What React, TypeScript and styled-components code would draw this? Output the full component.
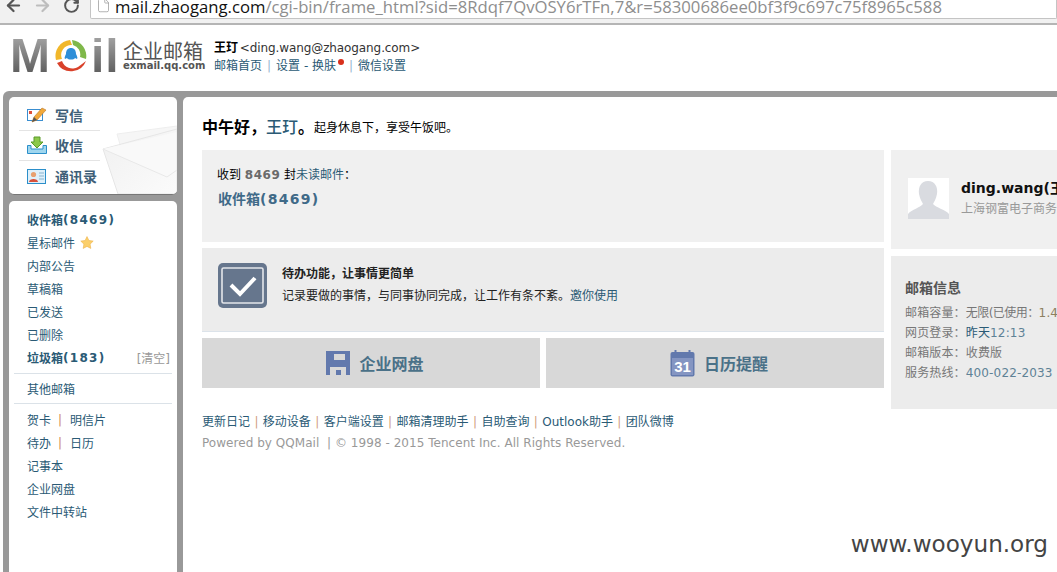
import React from "react";
import styled, { createGlobalStyle } from "styled-components";
import { ArrowLeft, ArrowRight, RotateCw, File } from "lucide-react";

const CJK = `"DejaVu Sans", "Noto Sans CJK SC", sans-serif`;

const Global = createGlobalStyle`
  html, body { margin: 0; padding: 0; background: #fff; overflow: hidden; }
  * { box-sizing: border-box; }
  a { text-decoration: none; }
`;

const Page = styled.div`
  width: 1057px; height: 572px; overflow: hidden; position: relative;
  display: flex; flex-direction: column; font-family: ${CJK}; font-size: 12px; color: #000;
`;

/* browser chrome */
const Chrome = styled.div`
  height: 25px; flex: none; background: #f1f1f1; border-bottom: 2px solid #b5b5b5;
  display: flex; align-items: flex-start; overflow: hidden;
`;
const NavButton = styled.span<{ $c: string }>`
  width: 29px; height: 16px; flex: none; display: flex; align-items: center; justify-content: center; color: ${p => p.$c};
`;
const Nav = styled.div`
  display: flex; margin-top: -3px; margin-left: -1px;
`;
const UrlBox = styled.div`
  margin-left: 4px; width: 970px; height: 20px; margin-top: -1px; background: #fff;
  border: 1px solid #c4c4c4; border-top: 0; border-radius: 0 0 2px 2px; display: flex; align-items: flex-start; padding-left: 5px; overflow: hidden;
`;
const UrlIcon = styled.span`
  width: 15px; flex: none; color: #999; margin-top: -1px; margin-right: 5px; display: flex;
`;
const UrlText = styled.div`
  font-family: "Open Sans", sans-serif; font-size: 16.7px; line-height: 17px; color: #8e8e8e; white-space: nowrap; margin: -1px 0 0 -1px;
  b { font-weight: 400; color: #111; }
`;

/* header */
const Header = styled.div`
  height: 66px; flex: none; display: flex; padding: 13px 0 0 10px;
`;
const Logo = styled.div`
  width: 107px; height: 36px; position: relative; display: flex; align-items: center;
`;
const LogoLetters = styled.span<{ $gap?: number }>`
  font-family: "Liberation Sans", sans-serif; font-weight: 700; font-size: 48px; line-height: 36px; letter-spacing: ${p => p.$gap ?? 0}px;
  background: linear-gradient(#a0a0a0, #5d5d5d); -webkit-background-clip: text; background-clip: text; color: transparent;
`;
const LogoRing = styled.svg`
  width: 36px; height: 36px; flex: none; margin: 0 2px 0 3px;
`;
const Brand = styled.div`
  margin-left: 6px; width: 85px; display: flex; flex-direction: column;
`;
const BrandTitle = styled.div`
  font-family: "Noto Sans CJK SC", sans-serif; font-size: 20px; line-height: 19px; color: #555; margin-top: 3px; white-space: nowrap;
`;
const BrandSub = styled.div`
  font-family: "DejaVu Sans", sans-serif; font-weight: 700; font-size: 10px; line-height: 11px; color: #555; white-space: nowrap;
`;
const UserBlock = styled.div`
  margin-left: 6px; display: flex; flex-direction: column; margin-top: 2px;
`;
const UserLine = styled.div`
  font-size: 12px; line-height: 17px; color: #333; white-space: nowrap; letter-spacing: -0.1px;
  b { color: #000; font-weight: 700; margin-right: 2px; }
`;
const HeaderLinks = styled.div`
  display: flex; align-items: center; font-size: 12px; line-height: 19px; color: #2a5a75; white-space: nowrap;
`;
const Pipe = styled.span`
  color: #9ab8d0; margin: 0 5px;
`;
const Dot = styled.span`
  width: 6px; height: 6px; border-radius: 50%; background: #d8301c; align-self: flex-start; margin: 2px 0 0 2px;
`;

/* frame */
const Frame = styled.div`
  flex: 1; min-height: 0; display: flex; gap: 6px; background: #999; padding: 6px 0 0 6px; margin-left: 3px; border-radius: 6px 0 0 0;
`;
const Side = styled.div`
  width: 168px; flex: none; display: flex; flex-direction: column; gap: 6px;
`;
const Quick = styled.div`
  height: 98px; flex: none; background: #fff; border-radius: 5px; border-bottom: 1px solid #777; position: relative; overflow: hidden; padding: 3px 0 0 10px;
`;
const Envelope = styled.svg`
  position: absolute; right: 0; bottom: 0; width: 76px; height: 70px;
`;
const QuickRow = styled.div<{ $last?: boolean }>`
  width: 81px; height: 30.5px; display: flex; align-items: center; gap: 8px; padding-left: 8px;
  border-bottom: ${p => (p.$last ? "0" : "1px solid #e4e4e4")}; position: relative;
  font-family: "Noto Sans CJK SC", sans-serif; font-size: 14px; font-weight: 700; color: #3f5f78; white-space: nowrap;
`;
const Folders = styled.div`
  flex: 1; background: #fff; border-radius: 5px 5px 0 0; padding: 7px 5px 0 5px;
`;
const Folder = styled.div<{ $bold?: boolean }>`
  height: 23px; padding-left: 13px; display: flex; align-items: center; white-space: nowrap;
  font-size: 12px; color: #2a5a75; font-weight: ${p => (p.$bold ? 700 : 400)};
`;
const Num = styled.span`
  letter-spacing: 1.3px;
`;
const Clear = styled.span`
  color: #999; font-weight: 400; padding-right: 2px; margin-left: auto;
`;
const StarMark = styled.svg`
  margin-left: 5px;
`;
const Rule = styled.div<{ $m?: string }>`
  height: 1px; background: #dbe2e8; margin: ${p => p.$m || "0"};
`;
const FolderPipe = styled.span`
  color: #d08a5a; margin: 0 8px 0 7px;
`;

/* main */
const Main = styled.div`
  flex: 1; min-width: 0; background: #fff; border-radius: 5px 0 0 0; overflow: hidden; padding: 19px 0 0 19px;
`;
const Greeting = styled.div`
  height: 34px; padding-bottom: 14px; display: flex; align-items: center; white-space: nowrap; font-size: 12px;
  strong { font-size: 16px; font-weight: 700; }
  em { font-style: normal; font-size: 16px; font-weight: 500; color: #2a5a75; }
`;
const Columns = styled.div`
  display: flex; gap: 7px; width: 900px;
`;
const Left = styled.div`
  width: 682px; flex: none; display: flex; flex-direction: column;
`;
const Right = styled.div`
  width: 211px; flex: none; display: flex; flex-direction: column; gap: 7px;
`;
const UnreadCard = styled.div`
  height: 92px; background: #f0f0f0; padding: 16px 15px; margin-bottom: 6px;
`;
const UnreadLine = styled.div`
  font-size: 12px; line-height: 18px; white-space: nowrap;
  b { color: #6a6a6a; letter-spacing: 0.5px; } a { color: #2a5a75; }
`;
const UnreadLink = styled.div`
  font-size: 14px; line-height: 22px; font-weight: 700; color: #3f6a88; margin: 4px 0 0 1px; white-space: nowrap;
`;
const TodoCard = styled.div`
  height: 84px; background: #ececec; border-bottom: 1px solid #dce3ea; display: flex; padding: 15px 16px; gap: 15px; margin-bottom: 6px;
`;
const TodoIcon = styled.svg`
  width: 49px; height: 45px; flex: none;
`;
const TodoText = styled.div`
  display: flex; flex-direction: column; padding-top: 2px;
`;
const TodoTitle = styled.div`
  font-weight: 700; font-size: 12px; line-height: 18px; color: #222; white-space: nowrap;
`;
const TodoDesc = styled.div`
  font-size: 12px; line-height: 20px; color: #222; white-space: nowrap; margin-top: 3px; a { color: #2a5a75; }
`;
const Shortcuts = styled.div`
  display: grid; grid-template-columns: 1fr 1fr; gap: 6px; height: 50px;
`;
const Shortcut = styled.div`
  background: #d8d8d8; display: flex; align-items: center; justify-content: center; gap: 9px; padding-left: 8px;
  font-family: "Noto Sans CJK SC", sans-serif; font-size: 16px; font-weight: 700; color: #4a7188; white-space: nowrap;
`;
const ProfileCard = styled.div`
  height: 99px; background: #f0f0f0; display: flex; align-items: center; gap: 12px; padding: 0 0 2px 17px; white-space: nowrap; overflow: hidden;
`;
const Avatar = styled.svg`
  width: 41px; height: 41px; flex: none;
`;
const ProfileName = styled.div`
  font-size: 14px; font-weight: 700; line-height: 20px; color: #111;
`;
const ProfileOrg = styled.div`
  font-size: 12px; line-height: 20px; color: #999; margin-top: 1px;
`;
const InfoCard = styled.div`
  height: 153px; background: #ececec; padding: 22px 0 0 14px; white-space: nowrap; overflow: hidden;
`;
const InfoTitle = styled.div`
  font-size: 14px; font-weight: 700; line-height: 20px; color: #555; margin-bottom: 5px;
`;
const InfoLine = styled.div`
  font-size: 12px; line-height: 20px; color: #777; letter-spacing: 0.15px;
  a { color: #2a5a75; } span { color: #5f8296; } i { font-style: normal; color: #8c8060; }
`;
const Tight = styled.b`
  font-weight: 400; letter-spacing: -0.55px;
`;
const Footer = styled.div`
  margin-top: 23px; width: 682px;
`;
const FooterLinks = styled.div`
  display: flex; font-size: 12px; line-height: 22px; color: #2a5a75; white-space: nowrap;
`;
const FooterPipe = styled.span`
  color: #d0a080; margin: 0 4.4px;
`;
const FooterCopy = styled.div`
  font-size: 12px; line-height: 21px; color: #999; white-space: nowrap; letter-spacing: 0.04px;
`;
const Watermark = styled.div`
  position: absolute; right: 9px; bottom: 14px; font-family: "DejaVu Sans", sans-serif; font-size: 23.1px; line-height: 28px; color: #444; background: #fff;
`;

const Ring = () => (
  <LogoRing viewBox="0 0 36 36">
    <path d="M3 22 A16 16 0 0 1 17 2 L19 7 A10 10 0 0 0 9 21 Z" fill="#f1b72a" />
    <path d="M19 2 A16 16 0 0 1 33 21 L27 19 A10 10 0 0 0 20 7 Z" fill="#7fb84a" />
    <path d="M33 23 A16 16 0 0 1 4 25 L9 23 A11 11 0 0 0 25 29 Z" fill="#d9412a" />
    <path d="M18 10 c-3 0 -5 2 -5 6 c-1 2 -2 4 -1 5 l2 -1 c1 2 7 2 8 0 l2 1 c1 -1 0 -3 -1 -5 c0 -4 -2 -6 -5 -6 Z" fill="#2f8fd8" />
  </LogoRing>
);

const PencilIcon = () => (
  <svg width="20" height="16" viewBox="0 0 20 16">
    <rect x="0.5" y="2.5" width="15" height="11" fill="#fff" stroke="#3a8ed0" />
    <rect x="2" y="4" width="3" height="3" fill="#e0503a" />
    <path d="M5 15 L7 10 L15 1 L19 3 L10 13 Z" fill="#f2a93a" stroke="#b8752a" strokeWidth="0.6" />
    <path d="M5 15 L7 10 L10 13 Z" fill="#555" />
  </svg>
);
const InboxIcon = () => (
  <svg width="20" height="18" viewBox="0 0 20 18">
    <path d="M0.5 9.5 H4 V13 H16 V9.5 H19.5 V17.5 H0.5 Z" fill="#9fd6ee" stroke="#2b8fca" />
    <path d="M7 1 H13 V6 H16 L10 12 L4 6 H7 Z" fill="#8cc84a" stroke="#5a9a2a" />
  </svg>
);
const ContactIcon = () => (
  <svg width="20" height="15" viewBox="0 0 20 15">
    <rect x="0.5" y="0.5" width="18" height="14" fill="#dff0fa" stroke="#2b8fca" />
    <circle cx="6.5" cy="5.5" r="2.6" fill="#e8a070" />
    <path d="M2 13 C2 9 11 9 11 13 Z" fill="#d8503a" />
    <path d="M12 4 H17 M12 7 H17 M12 10 H17" stroke="#8ab4d0" />
  </svg>
);
const Star = () => (
  <StarMark width="14" height="13" viewBox="0 0 24 23">
    <path d="M12 1 L15.4 8 L23 9 L17.5 14.4 L18.8 22 L12 18.4 L5.2 22 L6.5 14.4 L1 9 L8.6 8 Z" fill="#fbcf6a" stroke="#eeb04a" />
  </StarMark>
);

const UrlTail = "/cgi-bin/frame_html?sid=8Rdqf7QvOSY6rTFn,7&r=58300686ee0bf3f9c697c75f8965c588";

export default function App() {
  return (
    <Page>
      <Global />
      <Chrome>
        <Nav>
          <NavButton $c="#555"><ArrowLeft size={19} strokeWidth={2.8} /></NavButton>
          <NavButton $c="#bdbdbd"><ArrowRight size={19} strokeWidth={2.8} /></NavButton>
          <NavButton $c="#555"><RotateCw size={17} strokeWidth={2.8} /></NavButton>
        </Nav>
        <UrlBox>
          <UrlIcon><File size={15} strokeWidth={1.2} /></UrlIcon>
          <UrlText><b>mail.zhaogang.com</b>{UrlTail}</UrlText>
        </UrlBox>
      </Chrome>

      <Header>
        <Logo>
          <LogoLetters>M</LogoLetters>
          <Ring />
          <LogoLetters $gap={1}>il</LogoLetters>
        </Logo>
        <Brand>
          <BrandTitle>企业邮箱</BrandTitle>
          <BrandSub>exmail.qq.com</BrandSub>
        </Brand>
        <UserBlock>
          <UserLine><b>王玎</b>&lt;ding.wang@zhaogang.com&gt;</UserLine>
          <HeaderLinks>
            邮箱首页<Pipe>|</Pipe>设置 - 换肤<Dot /><Pipe>|</Pipe>微信设置
          </HeaderLinks>
        </UserBlock>
      </Header>

      <Frame>
        <Side>
          <Quick>
            <Envelope viewBox="0 0 76 70">
              <defs>
                <linearGradient id="env" x1="0" y1="0" x2="1" y2="1">
                  <stop offset="0" stopColor="#f0f0f0" />
                  <stop offset="1" stopColor="#fbfbfb" />
                </linearGradient>
              </defs>
              <path d="M16 10 L76 2 V12 L20 24 Z" fill="#f6f6f6" stroke="#eeeeee" />
              <path d="M2 25 L76 5 V70 H17 Z" fill="url(#env)" stroke="#e6e6e6" />
              <path d="M2 25 L66 53 L76 46 V8" fill="#f9f9f9" stroke="#e8e8e8" />
            </Envelope>
            <QuickRow><PencilIcon />写信</QuickRow>
            <QuickRow><InboxIcon />收信</QuickRow>
            <QuickRow $last><ContactIcon />通讯录</QuickRow>
          </Quick>
          <Folders>
            <Folder $bold>收件箱<Num>(8469)</Num></Folder>
            <Folder>星标邮件<Star /></Folder>
            <Folder>内部公告</Folder>
            <Folder>草稿箱</Folder>
            <Folder>已发送</Folder>
            <Folder>已删除</Folder>
            <Folder $bold>垃圾箱<Num>(183)</Num><Clear>[清空]</Clear></Folder>
            <Rule $m="4px 0 3px" />
            <Folder>其他邮箱</Folder>
            <Rule $m="3px 0 4px" />
            <Folder>贺卡<FolderPipe>|</FolderPipe>明信片</Folder>
            <Folder>待办<FolderPipe>|</FolderPipe>日历</Folder>
            <Folder>记事本</Folder>
            <Folder>企业网盘</Folder>
            <Folder>文件中转站</Folder>
          </Folders>
        </Side>

        <Main>
          <Greeting>
            <strong>中午好，</strong><em>王玎</em><strong>。</strong>起身休息下，享受午饭吧。
          </Greeting>
          <Columns>
            <Left>
              <UnreadCard>
                <UnreadLine>收到 <b>8469</b> 封<a>未读邮件</a>：</UnreadLine>
                <UnreadLink>收件箱<Num>(8469)</Num></UnreadLink>
              </UnreadCard>
              <TodoCard>
                <TodoIcon viewBox="0 0 49 45">
                  <rect width="49" height="45" rx="5" fill="#66768d" />
                  <rect x="4" y="5" width="41" height="35" rx="1.5" fill="#66768d" stroke="#e4e6ea" strokeWidth="1.6" />
                  <path d="M13 22 L22 31 L37 15" fill="none" stroke="#fff" strokeWidth="4" />
                </TodoIcon>
                <TodoText>
                  <TodoTitle>待办功能，让事情更简单</TodoTitle>
                  <TodoDesc>记录要做的事情，与同事协同完成，让工作有条不紊。<a>邀你使用</a></TodoDesc>
                </TodoText>
              </TodoCard>
              <Shortcuts>
                <Shortcut>
                  <svg width="24" height="24" viewBox="0 0 24 24">
                    <path d="M0 0 H24 V24 H0 Z" fill="#6279ad" />
                    <rect x="8" y="3" width="11" height="6" fill="#d8d8d8" />
                    <rect x="4" y="16" width="16" height="8" fill="#d8d8d8" />
                    <rect x="10" y="19" width="5" height="5" fill="#6279ad" />
                  </svg>
                  企业网盘
                </Shortcut>
                <Shortcut>
                  <svg width="25" height="27" viewBox="0 0 25 27">
                    <rect x="0.5" y="2" width="24" height="24.5" rx="2" fill="#6279ad" />
                    <rect x="2" y="8" width="21" height="17" fill="#8495c2" />
                    <rect x="4.5" y="0" width="2" height="4" fill="#6279ad" />
                    <rect x="18.5" y="0" width="2" height="4" fill="#6279ad" />
                    <text x="12.5" y="22" textAnchor="middle" fontSize="15" fill="#fff" fontFamily="Liberation Sans, sans-serif">31</text>
                  </svg>
                  日历提醒
                </Shortcut>
              </Shortcuts>
              <Footer>
                <FooterLinks>
                  更新日记<FooterPipe>|</FooterPipe>移动设备<FooterPipe>|</FooterPipe>客户端设置<FooterPipe>|</FooterPipe>邮箱清理助手<FooterPipe>|</FooterPipe>自助查询<FooterPipe>|</FooterPipe>Outlook助手<FooterPipe>|</FooterPipe>团队微博
                </FooterLinks>
                <FooterCopy>Powered by QQMail &nbsp;| © 1998 - 2015 Tencent Inc. All Rights Reserved.</FooterCopy>
              </Footer>
            </Left>
            <Right>
              <ProfileCard>
                <Avatar viewBox="0 0 41 41">
                  <rect width="41" height="41" fill="#fff" />
                  <path d="M20 3 C27 3 30 9 29 16 C28 21 26 24 25 26 C28 30 37 31 41 36 V41 H0 V36 C4 31 12 30 15 26 C14 24 12 21 11 16 C10 9 13 3 20 3 Z" fill="#d9dbe0" />
                </Avatar>
                <div>
                  <ProfileName>ding.wang(王玎)</ProfileName>
                  <ProfileOrg>上海钢富电子商务有限公司</ProfileOrg>
                </div>
              </ProfileCard>
              <InfoCard>
                <InfoTitle>邮箱信息</InfoTitle>
                <InfoLine>邮箱容量：<Tight>无限(已使用：</Tight><i>1.4G</i>)</InfoLine>
                <InfoLine>网页登录：<a>昨天</a><span>12:13</span></InfoLine>
                <InfoLine>邮箱版本：收费版</InfoLine>
                <InfoLine>服务热线：<span>400-022-2033</span></InfoLine>
              </InfoCard>
            </Right>
          </Columns>
        </Main>
      </Frame>
      <Watermark>www.wooyun.org</Watermark>
    </Page>
  );
}
